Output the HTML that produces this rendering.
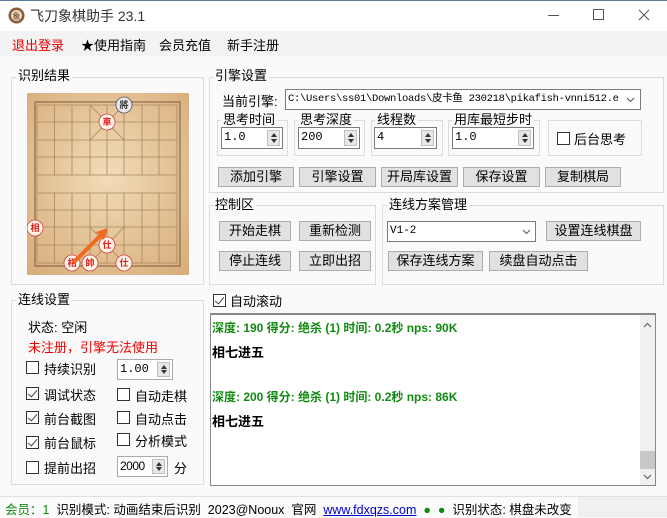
<!DOCTYPE html>
<html><head><meta charset="utf-8"><style>
*{box-sizing:border-box;margin:0;padding:0}
body{width:667px;height:517px;overflow:hidden;background:#fafafa;font-family:"Liberation Sans","Noto Sans CJK SC",sans-serif;font-size:13px;color:#000;position:relative}
.a{position:absolute;white-space:nowrap}
.gb{position:absolute;border:1px solid #dcdcdc}
.gl{position:absolute;background:#fafafa;padding:0 2px;line-height:15px;font-size:13px}
.btn{position:absolute;background:#e1e1e1;border:1px solid #adadad;text-align:center;font-size:13px;line-height:18px}
.in{position:absolute;background:#fff;border:1px solid #7a7a7a;font-family:"Liberation Mono","Noto Sans CJK SC",monospace;font-size:12px;line-height:18px;padding-left:2px;overflow:hidden;white-space:nowrap}
.sp{position:absolute;right:2px;top:2px;width:13px;bottom:2px;background:#e8e8e8;border:1px solid #c0c0c0}
.sp:before{content:"";position:absolute;left:3px;top:2px;border:3px solid transparent;border-bottom:4px solid #333;border-top:0}
.sp:after{content:"";position:absolute;left:3px;bottom:2px;border:3px solid transparent;border-top:4px solid #333;border-bottom:0}
.cb{position:absolute;width:13px;height:13px;border:1px solid #333;background:#fff}
.ck:after{content:"";position:absolute;left:3px;top:0px;width:4px;height:8px;border-right:1.5px solid #444;border-bottom:1.5px solid #444;transform:rotate(40deg)}
.g{color:#108a10;font-weight:bold;font-size:12px}
.k{font-weight:bold;font-size:13px}
</style></head><body>
<div class="a" style="left:0;top:0;width:667px;height:1px;background:#5a7a9a"></div>
<div class="a" style="left:0;top:1px;width:667px;height:30px;background:#fff"></div>
<svg class="a" style="left:8px;top:7px" width="17" height="17"><circle cx="8.5" cy="8.5" r="8" fill="#8a5a3a"/><circle cx="8.5" cy="8.5" r="5.5" fill="#e8d8c0"/><text x="8.5" y="12" font-size="8" text-anchor="middle" fill="#6a3a1a">象</text></svg>
<div class="a" style="left:30px;top:6px;font-size:14px;color:#333">飞刀象棋助手 23.1</div>
<div class="a" style="left:548px;top:15px;width:11px;height:1px;background:#555"></div>
<div class="a" style="left:593px;top:9px;width:11px;height:11px;border:1px solid #555"></div>
<svg class="a" style="left:638px;top:9px" width="12" height="12"><path d="M1 1L11 11M11 1L1 11" stroke="#555" stroke-width="1"/></svg>
<div class="a" style="left:0;top:31px;width:667px;height:25px;background:#f3f3f3"></div>
<div class="a" style="left:12px;top:35px;color:#e00">退出登录</div>
<div class="a" style="left:81px;top:35px">★使用指南</div>
<div class="a" style="left:159px;top:35px">会员充值</div>
<div class="a" style="left:227px;top:35px">新手注册</div>

<div class="gb" style="left:11px;top:77px;width:193px;height:208px"></div>
<div class="gl" style="left:16px;top:68px">识别结果</div>
<svg class="a" style="left:27px;top:93px" width="162" height="182">
<defs><radialGradient id="w" cx="50%" cy="45%" r="70%"><stop offset="0" stop-color="#f2dcb8"/><stop offset="1" stop-color="#d8ae7c"/></radialGradient></defs>
<rect width="162" height="182" fill="url(#w)"/>
<rect x="8" y="9" width="145" height="164" fill="none" stroke="#8a6a48" stroke-width="1.2"/>
<g stroke="#a88660" stroke-width="0.8" fill="none">
<path d="M10 12H150M10 29H150M10 47H150M10 64H150M10 82H150M10 100H150M10 117H150M10 134H150M10 152H150M10 170H150"/>
<path d="M10 12V170M150 12V170M27.5 12V82M45 12V82M63 12V82M80 12V82M97 12V82M115 12V82M132 12V82M27.5 100V170M45 100V170M63 100V170M80 100V170M97 100V170M115 100V170M132 100V170"/>
<path d="M63 12L97 47M97 12L63 47M63 134L97 170M97 134L63 170"/>
</g>
<g fill="#fff3e8" stroke="#d04040" stroke-width="0.8" font-size="9" text-anchor="middle" font-weight="bold">
<circle cx="97" cy="12" r="8" fill="#e8e8ee" stroke="#555"/><text x="97" y="15" fill="#333" stroke="none">將</text>
<circle cx="80" cy="29" r="8"/><text x="80" y="32" fill="#e02020" stroke="none">車</text>
<circle cx="8" cy="135" r="8"/><text x="8" y="138" fill="#e02020" stroke="none">相</text>
<circle cx="80" cy="152" r="8"/><text x="80" y="155" fill="#e02020" stroke="none">仕</text>
<circle cx="45" cy="170" r="8"/><text x="45" y="173" fill="#e02020" stroke="none">相</text>
<circle cx="63" cy="170" r="8"/><text x="63" y="173" fill="#e02020" stroke="none">帥</text>
<circle cx="97" cy="170" r="8"/><text x="97" y="173" fill="#e02020" stroke="none">仕</text>
</g>
<path d="M46 170L74 142" stroke="#f06a20" stroke-width="4"/><path d="M81 135L69 139L77 147Z" fill="#f06a20"/>
</svg>

<div class="gb" style="left:209px;top:77px;width:455px;height:116px"></div>
<div class="gl" style="left:213px;top:68px">引擎设置</div>
<div class="a" style="left:222px;top:91px">当前引擎:</div>
<div class="in" style="left:285px;top:89px;width:356px;height:21px;font-size:10.5px;letter-spacing:-0.3px;padding-right:18px">C:\Users\ss01\Downloads\皮卡鱼 230218\pikafish-vnni512.e</div>
<div class="a" style="left:620px;top:90px;width:20px;height:19px;background:#fff"></div>
<svg class="a" style="left:626px;top:97px" width="9" height="6"><path d="M1 1L4.5 4.5L8 1" stroke="#555" fill="none"/></svg>
<div class="gb" style="left:217px;top:120px;width:71px;height:36px"></div><div class="gl" style="left:221px;top:112px">思考时间</div>
<div class="in" style="left:221px;top:127px;width:62px;height:22px">1.0<div class="sp"></div></div>
<div class="gb" style="left:294px;top:120px;width:71px;height:36px"></div><div class="gl" style="left:298px;top:112px">思考深度</div>
<div class="in" style="left:298px;top:127px;width:62px;height:22px">200<div class="sp"></div></div>
<div class="gb" style="left:371px;top:120px;width:72px;height:36px"></div><div class="gl" style="left:375px;top:112px">线程数</div>
<div class="in" style="left:374px;top:127px;width:63px;height:22px">4<div class="sp"></div></div>
<div class="gb" style="left:448px;top:120px;width:92px;height:36px"></div><div class="gl" style="left:452px;top:112px">用库最短步时</div>
<div class="in" style="left:452px;top:127px;width:82px;height:22px">1.0<div class="sp"></div></div>
<div class="gb" style="left:548px;top:120px;width:94px;height:36px"></div>
<div class="cb" style="left:557px;top:132px"></div><div class="a" style="left:574px;top:129px">后台思考</div>
<div class="btn" style="left:218px;top:167px;width:76px;height:20px">添加引擎</div>
<div class="btn" style="left:299px;top:167px;width:77px;height:20px">引擎设置</div>
<div class="btn" style="left:381px;top:167px;width:77px;height:20px">开局库设置</div>
<div class="btn" style="left:463px;top:167px;width:77px;height:20px">保存设置</div>
<div class="btn" style="left:545px;top:167px;width:76px;height:20px">复制棋局</div>

<div class="gb" style="left:209px;top:205px;width:167px;height:80px"></div>
<div class="gl" style="left:213px;top:197px">控制区</div>
<div class="btn" style="left:219px;top:221px;width:72px;height:20px">开始走棋</div>
<div class="btn" style="left:299px;top:221px;width:72px;height:20px">重新检测</div>
<div class="btn" style="left:219px;top:251px;width:72px;height:20px">停止连线</div>
<div class="btn" style="left:299px;top:251px;width:72px;height:20px">立即出招</div>
<div class="gb" style="left:382px;top:205px;width:282px;height:80px"></div>
<div class="gl" style="left:387px;top:197px">连线方案管理</div>
<div class="in" style="left:387px;top:221px;width:149px;height:21px;font-size:11px">V1-2</div>
<svg class="a" style="left:522px;top:229px" width="9" height="6"><path d="M1 1L4.5 4.5L8 1" stroke="#555" fill="none"/></svg>
<div class="btn" style="left:546px;top:221px;width:95px;height:20px">设置连线棋盘</div>
<div class="btn" style="left:388px;top:251px;width:95px;height:20px">保存连线方案</div>
<div class="btn" style="left:489px;top:251px;width:99px;height:20px">续盘自动点击</div>

<div class="gb" style="left:11px;top:300px;width:193px;height:185px"></div>
<div class="gl" style="left:16px;top:292px">连线设置</div>
<div class="a" style="left:28px;top:317px">状态: 空闲</div>
<div class="a" style="left:28px;top:337px;color:#e00">未注册，引擎无法使用</div>
<div class="cb" style="left:26px;top:361px"></div><div class="a" style="left:44px;top:359px">持续识别</div>
<div class="in" style="left:117px;top:359px;width:56px;height:21px;border-color:#aaa">1.00<div class="sp"></div></div>
<div class="cb ck" style="left:26px;top:387px"></div><div class="a" style="left:44px;top:385px">调试状态</div>
<div class="cb" style="left:117px;top:388px"></div><div class="a" style="left:135px;top:386px">自动走棋</div>
<div class="cb ck" style="left:26px;top:411px"></div><div class="a" style="left:44px;top:409px">前台截图</div>
<div class="cb" style="left:117px;top:411px"></div><div class="a" style="left:135px;top:409px">自动点击</div>
<div class="cb ck" style="left:26px;top:436px"></div><div class="a" style="left:44px;top:433px">前台鼠标</div>
<div class="cb" style="left:117px;top:433px"></div><div class="a" style="left:135px;top:431px">分析模式</div>
<div class="cb" style="left:26px;top:461px"></div><div class="a" style="left:44px;top:458px">提前出招</div>
<div class="in" style="left:117px;top:456px;width:51px;height:21px;border-color:#aaa;font-family:'Liberation Sans';letter-spacing:-0.5px">2000<div class="sp"></div></div>
<div class="a" style="left:174px;top:458px">分</div>

<div class="cb ck" style="left:213px;top:294px"></div><div class="a" style="left:230px;top:291px">自动滚动</div>
<div class="a" style="left:210px;top:313px;width:446px;height:173px;background:#fff;border:1px solid #888;border-top:2px solid #888"></div>
<div class="a" style="left:640px;top:315px;width:15px;height:170px;background:#f0f0f0"></div>
<div class="a" style="left:640px;top:451px;width:15px;height:18px;background:#c8c8c8"></div>
<svg class="a" style="left:643px;top:322px" width="9" height="6"><path d="M1 5L4.5 1.5L8 5" stroke="#555" fill="none"/></svg>
<svg class="a" style="left:643px;top:474px" width="9" height="6"><path d="M1 1L4.5 4.5L8 1" stroke="#555" fill="none"/></svg>
<div class="a g" style="left:212px;top:319px">深度: 190 得分: 绝杀 (1) 时间: 0.2秒 nps: 90K</div>
<div class="a k" style="left:212px;top:342px">相七进五</div>
<div class="a g" style="left:212px;top:388px">深度: 200 得分: 绝杀 (1) 时间: 0.2秒 nps: 86K</div>
<div class="a k" style="left:212px;top:411px">相七进五</div>

<div class="a" style="left:0;top:496px;width:667px;height:21px;background:#f0f0f0;border-top:1px solid #e0e0e0"></div>
<div class="a" style="left:0;top:497px;width:578px;height:20px;background:#fbfbfb"></div>
<div class="a" style="left:5px;top:499px;font-size:12.5px"><span style="color:#108a10">会员：1</span>&nbsp; 识别模式: 动画结束后识别&nbsp; 2023@Nooux&nbsp; 官网&nbsp; <span style="color:#00c;text-decoration:underline">www.fdxqzs.com</span>&nbsp; <span style="color:#108a10">●&nbsp; ●</span>&nbsp; 识别状态: 棋盘未改变</div>
</body></html>
